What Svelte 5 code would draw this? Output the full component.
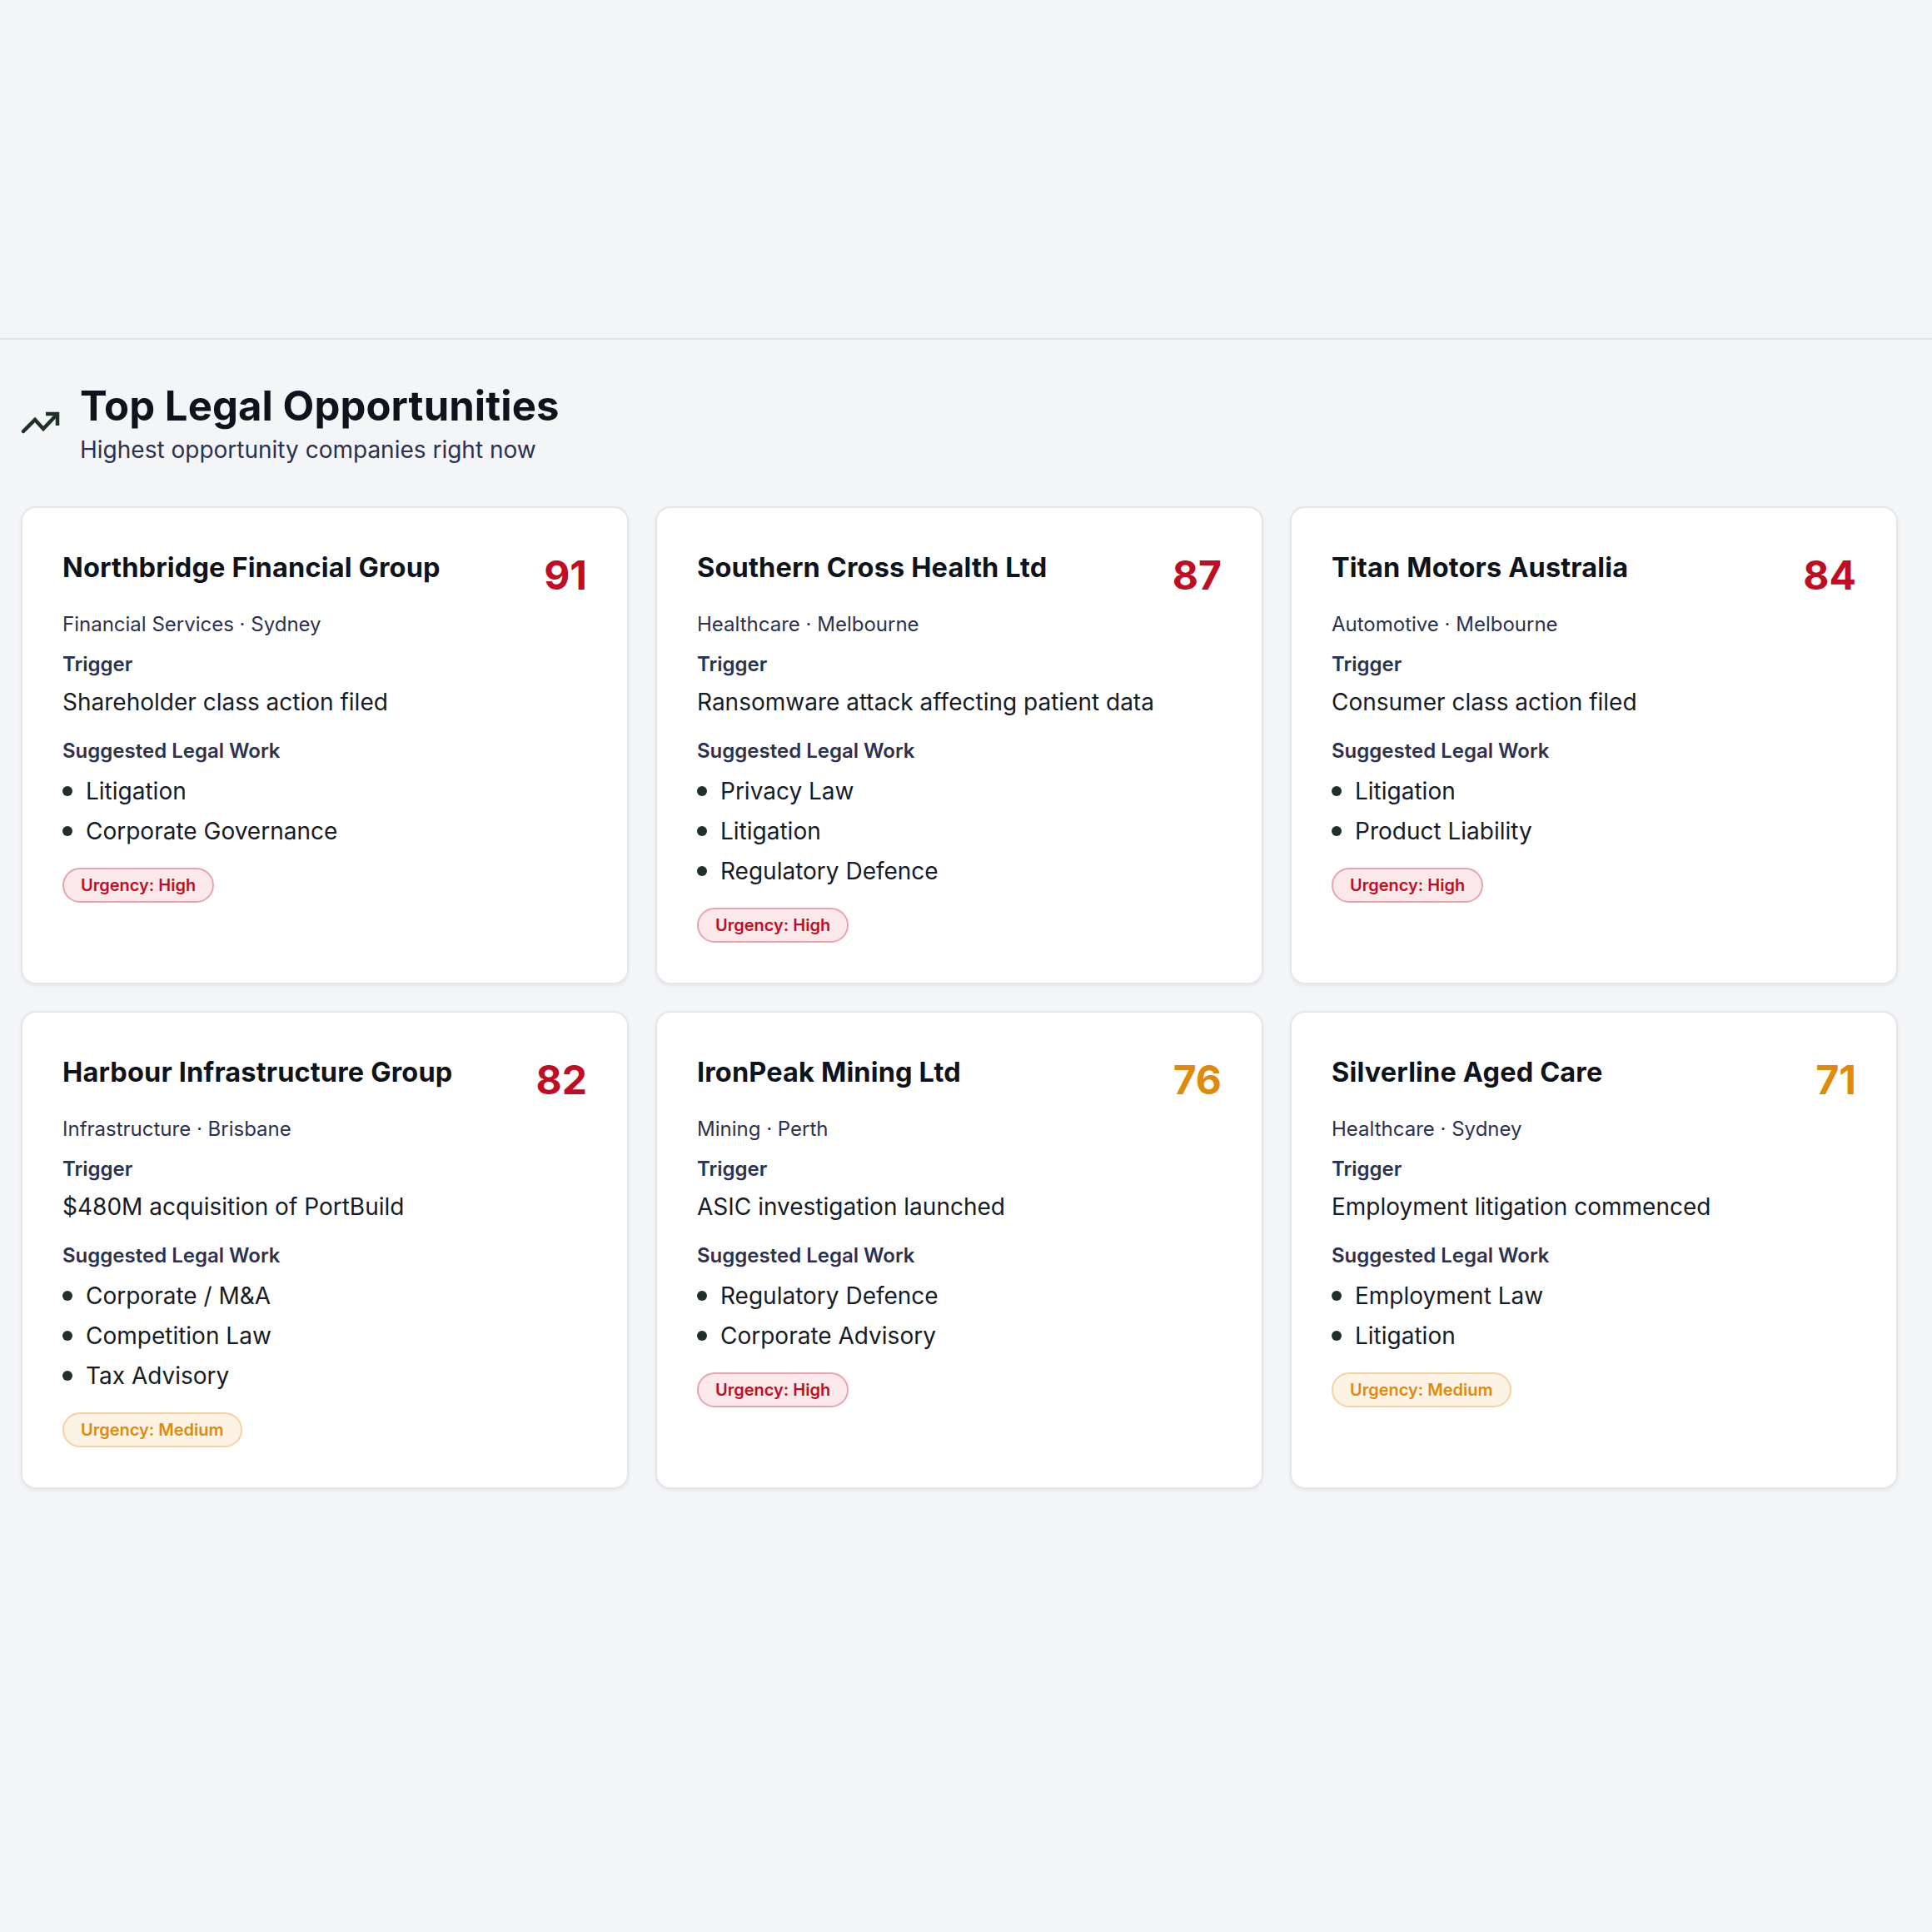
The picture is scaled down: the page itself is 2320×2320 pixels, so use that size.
<script>
    const cards = [
        { name: 'Northbridge Financial Group', score: 91, meta: 'Financial Services · Sydney', trigger: 'Shareholder class action filed', work: ['Litigation', 'Corporate Governance'], urgency: 'High' },
        { name: 'Southern Cross Health Ltd', score: 87, meta: 'Healthcare · Melbourne', trigger: 'Ransomware attack affecting patient data', work: ['Privacy Law', 'Litigation', 'Regulatory Defence'], urgency: 'High' },
        { name: 'Titan Motors Australia', score: 84, meta: 'Automotive · Melbourne', trigger: 'Consumer class action filed', work: ['Litigation', 'Product Liability'], urgency: 'High' },
        { name: 'Harbour Infrastructure Group', score: 82, meta: 'Infrastructure · Brisbane', trigger: '$480M acquisition of PortBuild', work: ['Corporate / M&A', 'Competition Law', 'Tax Advisory'], urgency: 'Medium' },
        { name: 'IronPeak Mining Ltd', score: 76, meta: 'Mining · Perth', trigger: 'ASIC investigation launched', work: ['Regulatory Defence', 'Corporate Advisory'], urgency: 'High' },
        { name: 'Silverline Aged Care', score: 71, meta: 'Healthcare · Sydney', trigger: 'Employment litigation commenced', work: ['Employment Law', 'Litigation'], urgency: 'Medium' }
    ];
</script>

<div class="top"></div>

<section class="section">
    <header class="head">
        <svg class="trend" viewBox="0 0 48 48" fill="none" stroke="#1f2f2a" stroke-width="4.5" stroke-linecap="round" stroke-linejoin="miter">
            <path d="M3 33 L17 19 L27 30 L43 13" />
            <path d="M30 12 H44 V26" stroke-linecap="butt" />
        </svg>
        <div>
            <h2>Top Legal Opportunities</h2>
            <p>Highest opportunity companies right now</p>
        </div>
    </header>

    <div class="grid">
        {#each cards as card}
            <article class="card">
                <div class="row">
                    <h3>{card.name}</h3>
                    <span class="score" class:amber={card.score < 80}>{card.score}</span>
                </div>
                <div class="meta">{card.meta}</div>
                <div class="label">Trigger</div>
                <div class="trigger">{card.trigger}</div>
                <div class="label work">Suggested Legal Work</div>
                <ul>
                    {#each card.work as item}
                        <li>{item}</li>
                    {/each}
                </ul>
                <span class="badge" class:medium={card.urgency === 'Medium'}>Urgency: {card.urgency}</span>
            </article>
        {/each}
    </div>
</section>

<style>
    :global(body) {
        background: #f4f5f7;
        font-family: Inter, sans-serif;
        height: 2320px;
    }

    .top {
        height: 406px;
        border-bottom: 2px solid #e2e4e8;
    }

    .section {
        padding: 50px 41px 0 25px;
    }

    .head {
        display: flex;
        align-items: center;
        gap: 23px;
        margin-bottom: 48px;
    }

    .trend {
        width: 48px;
        height: 48px;
        flex: none;
    }

    h2 {
        margin: 0;
        font-size: 49px;
        line-height: 60px;
        font-weight: 650;
        letter-spacing: 0.1px;
        color: #0f141c;
    }

    .head p {
        margin: 1px 0 -1px;
        font-size: 28px;
        line-height: 42px;
        color: #2b3150;
    }

    .grid {
        display: grid;
        grid-template-columns: repeat(3, 1fr);
        gap: 32px;
    }

    .card {
        height: 574px;
        box-sizing: border-box;
        padding: 49px 48px;
        background: #fff;
        border: 2px solid #e4e6ea;
        border-radius: 18px;
        box-shadow: 0 2px 4px rgba(20, 25, 40, 0.06);
    }

    .row {
        display: flex;
        justify-content: space-between;
        align-items: flex-start;
        height: 72px;
    }

    h3 {
        margin: 0;
        font-size: 32.5px;
        line-height: 46px;
        font-weight: 650;
        letter-spacing: 0.15px;
        color: #0f141c;
    }

    .score {
        font-size: 48px;
        line-height: 62px;
        font-weight: 700;
        margin-top: 1px;
        color: #c10d24;
    }

    .score.amber {
        color: #e08a0b;
    }

    .meta {
        font-size: 24px;
        line-height: 38px;
        margin-bottom: 10px;
        color: #2b3150;
    }

    .label {
        font-size: 24px;
        line-height: 38px;
        font-weight: 600;
        color: #2b3150;
    }

    .trigger {
        font-size: 28px;
        line-height: 46px;
        margin-top: 3px;
        color: #161b26;
    }

    .work {
        margin-top: 17px;
    }

    ul {
        list-style: none;
        margin: 5px 0 0;
        padding: 0;
    }

    li {
        position: relative;
        padding-left: 28px;
        font-size: 28px;
        line-height: 48px;
        color: #161b26;
    }

    li::before {
        content: '';
        position: absolute;
        left: 0;
        top: 18px;
        width: 12px;
        height: 12px;
        border-radius: 50%;
        background: #1f2f2a;
    }

    .badge {
        display: inline-block;
        margin-top: 20px;
        padding: 0 20px;
        height: 42px;
        box-sizing: border-box;
        line-height: 38px;
        font-size: 20px;
        font-weight: 600;
        color: #c10d24;
        background: #fbe8ea;
        border: 2px solid #e9a3ac;
        border-radius: 21px;
    }

    .badge.medium {
        color: #e08a0b;
        background: #fdf3e5;
        border-color: #f4d29f;
    }
</style>
